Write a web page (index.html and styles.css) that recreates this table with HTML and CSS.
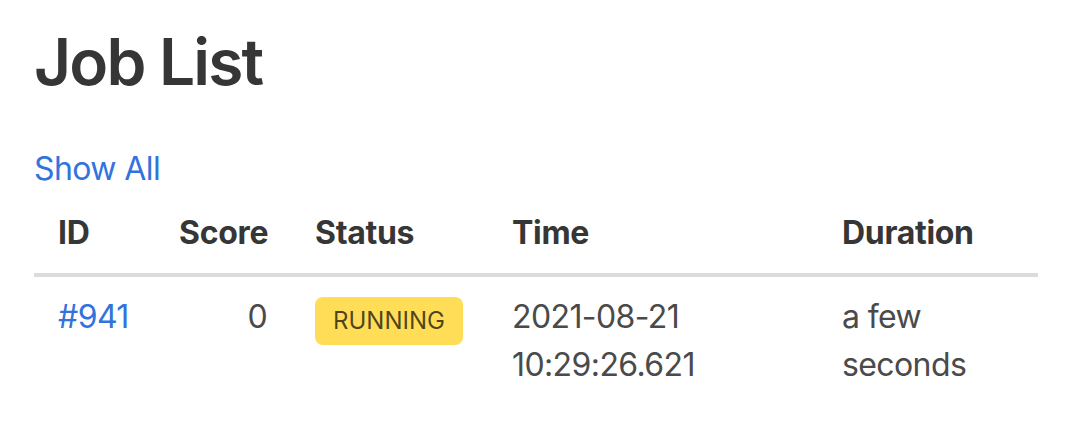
FILE: index.html
```html
<!DOCTYPE html>
<html>
<head>
  <meta charset="utf-8">
  <link rel="stylesheet" href="styles.css">
</head>
<body>
  <div class="page">
    <h1 class="title">Job List</h1>
    <div class="filters"><a href="#">Show All</a></div>

    <table class="jobs">
      <colgroup>
        <col class="col-id">
        <col class="col-score">
        <col class="col-status">
        <col class="col-time">
        <col class="col-duration">
      </colgroup>
      <thead>
        <tr>
          <th>ID</th>
          <th class="num">Score</th>
          <th>Status</th>
          <th>Time</th>
          <th>Duration</th>
        </tr>
      </thead>
      <tbody>
        <tr>
          <td><a href="#">#941</a></td>
          <td class="num">0</td>
          <td><span class="tag is-warning">RUNNING</span></td>
          <td>2021-08-21<br>10:29:26.621</td>
          <td>a few<br>seconds</td>
        </tr>
      </tbody>
    </table>
  </div>
</body>
</html>
```

FILE: styles.css
```css
body {
  margin: 0;
  font-family: Inter, "Noto Sans", sans-serif;
  font-size: 32px;
  line-height: 1.5;
  letter-spacing: -0.6px;
  color: #4a4a4a;
  background: #fff;
}

a {
  color: #3273dc;
  text-decoration: none;
}

.page {
  padding: 26px 46px 0 34px;
}

.title {
  margin: 0 0 47px;
  font-size: 64px;
  font-weight: 600;
  line-height: 1.125;
  letter-spacing: -1.8px;
  color: #363636;
}

.jobs {
  width: 100%;
  table-layout: fixed;
  border-collapse: collapse;
}

.col-id { width: 121px; }
.col-score { width: 136px; }
.col-status { width: 197px; }
.col-time { width: 330px; }
.col-duration { width: 220px; }

.jobs th,
.jobs td {
  padding: 16px 24px;
  text-align: left;
  vertical-align: top;
}

.jobs th {
  color: #363636;
  font-weight: 700;
  letter-spacing: -0.3px;
  border-bottom: 4px solid #dbdbdb;
}

.jobs .num {
  text-align: right;
}

.tag {
  display: inline-flex;
  align-items: center;
  height: 48px;
  padding: 0 18px;
  margin-top: 4px;
  border-radius: 8px;
  font-size: 24px;
  line-height: 1.5;
  letter-spacing: 0;
  vertical-align: top;
}

.is-warning {
  background: #ffdd57;
  color: rgba(0, 0, 0, 0.7);
}
```
